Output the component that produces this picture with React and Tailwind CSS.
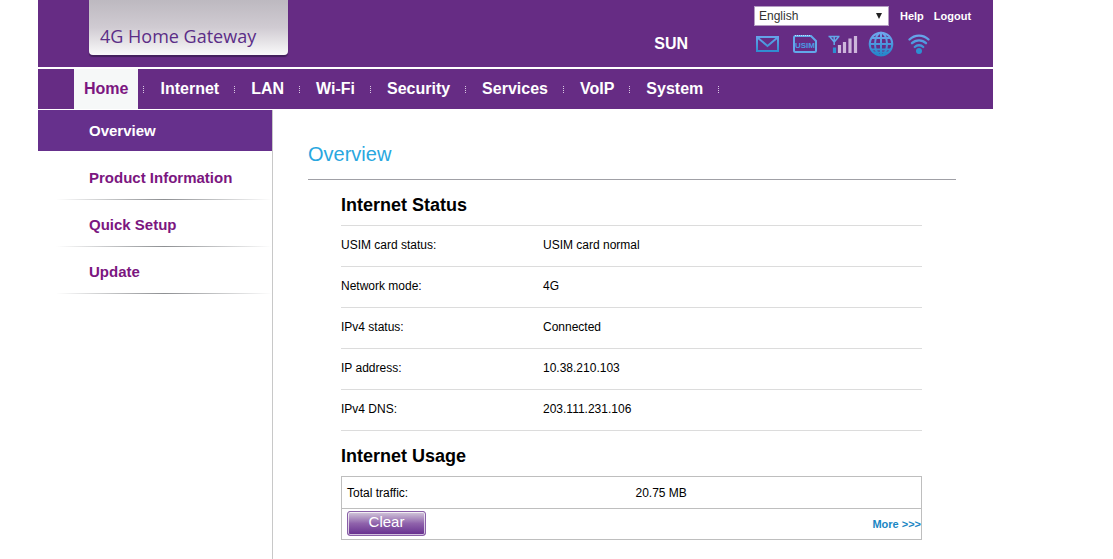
import React from 'react';

const NAV_ITEMS = ['Internet', 'LAN', 'Wi-Fi', 'Security', 'Services', 'VoIP', 'System'];

const SIDE_ITEMS = ['Product Information', 'Quick Setup', 'Update'];

const STATUS_ROWS = [
  { label: 'USIM card status:', value: 'USIM card normal' },
  { label: 'Network mode:', value: '4G' },
  { label: 'IPv4 status:', value: 'Connected' },
  { label: 'IP address:', value: '10.38.210.103' },
  { label: 'IPv4 DNS:', value: '203.111.231.106' },
];

const STATUS_ICONS = [
  {
    label: 'Messages',
    icon: <svg width="26" height="26" fill="none" stroke="url(#iconBlue)" strokeWidth="2" viewBox="0 0 26 26"><rect x="3" y="6" width="21" height="14"/><path d="M4 7l9.500 8L23 7"/></svg>,
  },
  {
    label: 'USIM card',
    icon: (
      <svg width="26" height="26" fill="none" stroke="#62a8ea" strokeWidth="2" viewBox="0 0 26 26">
        <path d="M3.500 5h15.500l5 5v9.500a1.500 1.500 0 0 1-1.500 1.500h-19a1.500 1.500 0 0 1-1.500-1.500v-13a1.500 1.500 0 0 1 1.500-1.500z"/>
        <path d="M3 4.500h16" stroke="#c4dcf8" strokeWidth="1" strokeDasharray="1 1"/>
        <text x="13" y="17" textAnchor="middle" fill="#4a9be4" stroke="none" className="font-['Liberation_Sans'] text-[8px] font-bold">USIM</text>
      </svg>
    ),
  },
  {
    label: 'Signal strength',
    icon: (
      <svg width="26" height="26" fill="none" viewBox="0 0 26 26" className="overflow-visible">
        <path d="M-1.500 5.500h11M0 6l4.200 5L8.500 6M4.200 5v9" stroke="#62a8ea" strokeWidth="1.500"/>
        <path d="M4.500 16.500v5.500" stroke="#2d8fd2" strokeWidth="3.200"/>
        <path d="M9.500 14v8M14.500 11v11M20 7.500V22M25.500 5v17" stroke="#cdb6db" strokeWidth="3.200" strokeLinecap="butt"/>
      </svg>
    ),
  },
  {
    label: 'Internet connection',
    icon: (
      <svg width="26" height="26" fill="none" stroke="url(#iconBlue)" strokeWidth="2" viewBox="0 0 26 26">
        <circle cx="13" cy="13" r="11.300"/>
        <ellipse cx="13" cy="13" rx="6" ry="11.300"/>
        <path d="M13 1.500V24.500M4 7h18M1.500 13h23M3 18.500h20M6 21.500h14" />
      </svg>
    ),
  },
  {
    label: 'Wi-Fi',
    icon: (
      <svg width="26" height="26" fill="none" stroke="url(#iconBlue)" strokeWidth="2.400" strokeLinecap="round" viewBox="0 0 26 26">
        <path d="M3.500 8.500a13.500 13.500 0 0 1 19 0M6 12.200a10 10 0 0 1 14 0M8.800 16a6 6 0 0 1 8.400 0"/>
        <circle cx="13" cy="20" r="3" fill="#2d8fd2" stroke="none"/>
      </svg>
    ),
  },
];

function Separator() {
  return <span className="h-[7px] w-px bg-[repeating-linear-gradient(to_bottom,#d9c9e2_0_1px,transparent_1px_2px)]" />;
}

function Header() {
  return (
    <header className="flex h-[67px] items-start justify-between bg-[#662c84] pr-[23px] pl-[51px]">
      <svg width="0" height="0" className="absolute">
        <defs>
          <linearGradient id="iconBlue" gradientUnits="userSpaceOnUse" x1="0" y1="4" x2="0" y2="23">
            <stop offset="0" stopColor="#6ba6ec"/>
            <stop offset="1" stopColor="#2688cc"/>
          </linearGradient>
        </defs>
      </svg>

      {/* Logo */}
      <div className="flex h-[55px] w-[199px] items-end rounded-b-[4px] bg-linear-to-b from-[#bdb9c0] via-[#d0cbd2] to-[#fafafa] pb-1.5 pl-[11px] shadow-[0_2px_1px_#43205c]">
        <span className="font-['Open_Sans','Noto_Sans',sans-serif] text-[18px] leading-[26px] font-medium whitespace-nowrap text-[#5b2d87]">4G Home Gateway</span>
      </div>

      <div className="flex">
        <div className="mr-[66px] pt-[33px] text-base leading-[22px] font-bold text-white">SUN</div>
        <div className="w-[216px] pt-1.5">
          <div className="flex items-center text-[11px] font-bold text-white">
            <div className="relative">
              <select aria-label="Language" defaultValue="English" className="block h-5 w-[135px] appearance-none border border-[#b49cc2] bg-white pr-4 pl-1 text-xs font-normal text-[#333]">
                <option>English</option>
              </select>
              <svg width="6" height="6" viewBox="0 0 6 6" className="pointer-events-none absolute top-[7px] right-[7px]"><path d="M0 0h6L3 6z" fill="#222"/></svg>
            </div>
            <a href="#help" className="ml-[11px]">Help</a>
            <a href="#logout" className="ml-2.5">Logout</a>
          </div>
          <div className="mt-[5px] flex gap-3">
            {STATUS_ICONS.map((item) => (
              <span key={item.label} role="img" aria-label={item.label}>{item.icon}</span>
            ))}
          </div>
        </div>
      </div>
    </header>
  );
}

function Nav() {
  return (
    <nav className="mt-0.5 flex h-10 items-center bg-[#662c84] pl-9 text-base font-bold text-white">
      <a href="#home" className="mr-[5px] flex h-full items-center bg-[#f6f8f8] px-2.5 text-[#7b1680]">Home</a>
      <Separator />
      {NAV_ITEMS.map((label) => (
        <React.Fragment key={label}>
          <a href={`#${label}`} className="mr-[15px] ml-4">{label}</a>
          <Separator />
        </React.Fragment>
      ))}
    </nav>
  );
}

function Sidebar() {
  return (
    <aside className="w-[235px] shrink-0 border-r border-[#c8c8c8] text-[15px] font-bold">
      <a href="#overview" className="mb-0.5 flex h-[41px] items-center bg-[#66308c] pt-0.5 pl-[51px] text-white">Overview</a>
      {SIDE_ITEMS.map((label) => (
        <div key={label} className="pl-[18px]">
          <a href={`#${label}`} className="flex h-[46px] items-center pt-1 pl-[33px] text-[#7b1680]">{label}</a>
          <div className="h-px bg-linear-to-r from-white via-[#8e9093] to-white" />
        </div>
      ))}
    </aside>
  );
}

export default function App() {
  return (
    <div className="mr-[120px] ml-[38px] flex min-h-screen flex-col bg-white font-['Liberation_Sans',Arial,sans-serif] text-black">
      <Header />
      <Nav />
      <div className="mt-px flex flex-1">
        <Sidebar />
        <main className="flex-1 pt-[30px] pr-[37px] pl-[35px]">
          <h1 className="h-10 border-b border-[#a0a0a6] text-xl leading-7 text-[#29a7df]">Overview</h1>

          <div className="pr-[34px] pl-[33px]">
            <h2 className="pt-3 pb-[7px] text-lg leading-[26px] font-bold">Internet Status</h2>
            <table className="w-full table-fixed border-t border-[#dcdcdc] text-xs">
              <tbody>
                {STATUS_ROWS.map((row) => (
                  <tr key={row.label} className="h-[41px] border-b border-[#dcdcdc]">
                    <th scope="row" className="w-[202px] pb-0.5 text-left font-normal">{row.label}</th>
                    <td className="pb-0.5">{row.value}</td>
                  </tr>
                ))}
              </tbody>
            </table>

            <h2 className="pt-3 pb-[7px] text-lg leading-[26px] font-bold">Internet Usage</h2>
            <table className="w-full border border-[#bebebe] text-xs">
              <tbody>
                <tr className="h-8 border-b border-[#bebebe]">
                  <th scope="row" className="w-1/2 pl-[5px] text-left font-normal">Total traffic:</th>
                  <td className="pl-1">20.75 MB</td>
                </tr>
                <tr className="h-[31px]">
                  <td className="pb-0.5 pl-[5px]">
                    <button type="button" className="block h-[25px] w-[79px] rounded-[3px] border border-[#8a5fa8] bg-linear-to-b from-[#d3c8da] via-[#8f62ab] to-[#662c8e] pb-0.5 text-[15px] leading-5 text-white inset-ring inset-ring-white/70">Clear</button>
                  </td>
                  <td className="text-right text-[11px] font-bold text-[#1a87c4]"><a href="#more">More &gt;&gt;&gt;</a></td>
                </tr>
              </tbody>
            </table>
          </div>
        </main>
      </div>
    </div>
  );
}
